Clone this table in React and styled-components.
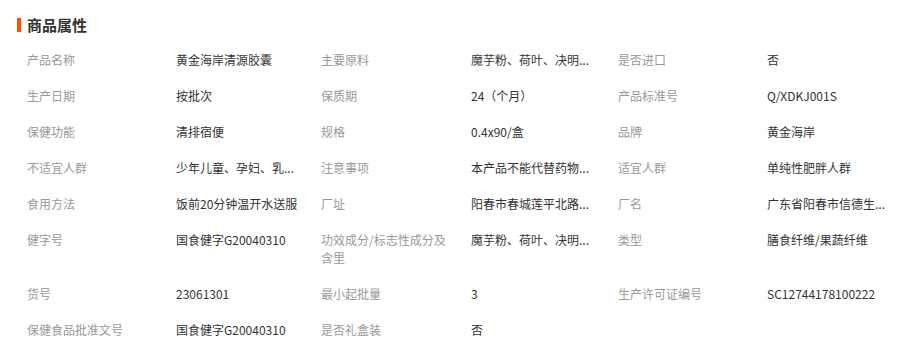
import styled, { createGlobalStyle } from 'styled-components';

const GlobalStyle = createGlobalStyle`
    body {
        margin: 0;
        background: #fff;
        font-family: "Noto Sans CJK SC", "Liberation Sans", sans-serif;
    }
`;

const Section = styled.div`
    padding: 16px 0 0 17px;
`;

const Title = styled.h3`
    display: flex;
    align-items: center;
    gap: 6px;
    margin: 0 0 8px;
    height: 18px;
    font-size: 15px;
    line-height: 18px;
    font-weight: bold;
    color: #333;
    &::before {
        content: '';
        width: 4px;
        height: 14px;
        background: #ff5000;
    }
`;

const Table = styled.div`
    display: grid;
    grid-template-columns: 149px 145px 150px 147px 149px 1fr;
    padding-left: 10px;
    font-size: 12px;
    line-height: 18px;
`;

const Label = styled.div`
    padding: 9px 20px 9px 0;
    color: #999;
`;

const Value = styled.div`
    padding: 9px 0;
    color: #333;
    white-space: nowrap;
`;

// 过长的值已按页面显示截断
const attrs = [
    ['产品名称', '黄金海岸清源胶囊'],
    ['主要原料', '魔芋粉、荷叶、决明...'],
    ['是否进口', '否'],
    ['生产日期', '按批次'],
    ['保质期', '24（个月）'],
    ['产品标准号', 'Q/XDKJ001S'],
    ['保健功能', '清排宿便'],
    ['规格', '0.4x90/盒'],
    ['品牌', '黄金海岸'],
    ['不适宜人群', '少年儿童、孕妇、乳...'],
    ['注意事项', '本产品不能代替药物...'],
    ['适宜人群', '单纯性肥胖人群'],
    ['食用方法', '饭前20分钟温开水送服'],
    ['厂址', '阳春市春城莲平北路...'],
    ['厂名', '广东省阳春市信德生...'],
    ['健字号', '国食健字G20040310'],
    ['功效成分/标志性成分及含里', '魔芋粉、荷叶、决明...'],
    ['类型', '膳食纤维/果蔬纤维'],
    ['货号', '23061301'],
    ['最小起批量', '3'],
    ['生产许可证编号', 'SC12744178100222'],
    ['保健食品批准文号', '国食健字G20040310'],
    ['是否礼盒装', '否'],
];

function App() {
    return (
        <Section>
            <GlobalStyle />
            <Title>商品属性</Title>
            <Table>
                {attrs.map(([label, value]) => [
                    <Label key={label + '-l'}>{label}</Label>,
                    <Value key={label + '-v'}>{value}</Value>,
                ])}
            </Table>
        </Section>
    );
}

export default App;
